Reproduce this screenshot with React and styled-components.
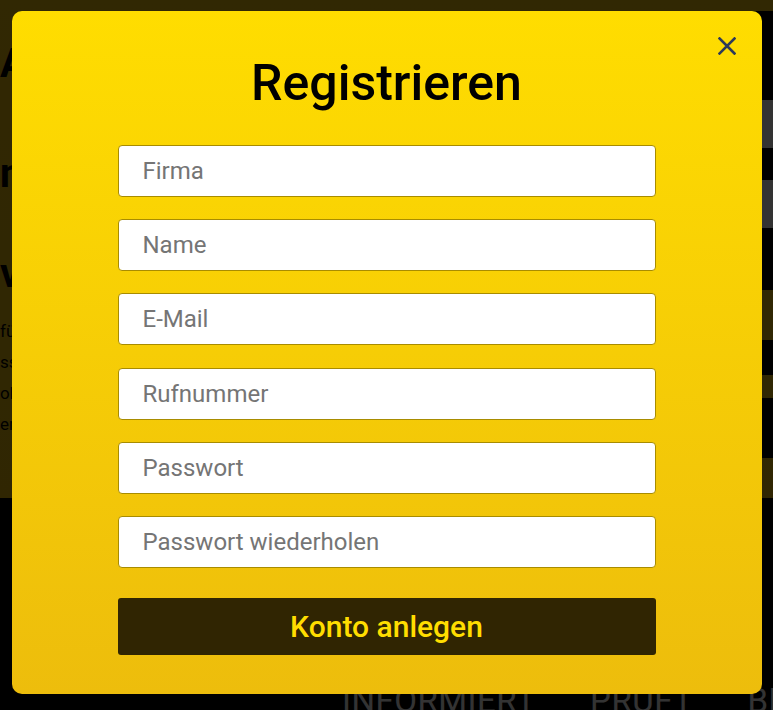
import React from "react";
import styled, { createGlobalStyle } from "styled-components";

const GlobalStyle = createGlobalStyle`
  html, body {
    margin: 0;
    padding: 0;
    background: #000;
    font-family: Roboto, "Liberation Sans", sans-serif;
    overflow: hidden;
  }
  * {
    box-sizing: border-box;
  }
`;

const Page = styled.div`
  width: 773px;
  height: 710px;
  overflow: hidden;
  background: #000;
`;

const Hero = styled.section`
  height: 498px;
  display: grid;
  grid-template-columns: 1fr 230px;
  background: linear-gradient(#f3c512, #efbf0e);
`;

const HeroText = styled.div`
  padding-top: 44px;
  color: #000;
`;

const HeroHeading = styled.div`
  font-size: 40px;
  font-weight: 700;
  line-height: 1;
  height: ${props => props.h}px;
`;

const HeroLine = styled.div`
  font-size: 17px;
  line-height: 31px;
`;

const Side = styled.div`
  display: flex;
  flex-direction: column;
`;

const LoginBox = styled.div`
  margin-top: 11px;
  height: 364px;
  background: #000;
  padding: 32px 0 0 20px;
  display: flex;
  flex-direction: column;
`;

const LoginTitle = styled.div`
  color: #f3c512;
  font-size: 28px;
  font-weight: 500;
  height: 57px;
`;

const LoginField = styled.div`
  height: 48px;
  background: #fff;
  margin-bottom: 32px;
`;

const LoginButton = styled.div`
  margin-top: 30px;
  height: 50px;
  background: #f3c512;
  color: #000;
  font-size: 24px;
  padding: 10px 20px;
`;

const InfoBox = styled.div`
  margin-top: 23px;
  height: 60px;
  background: #000;
  color: #f3c512;
  font-size: 16px;
  padding: 20px;
`;

const Lower = styled.section`
  height: 212px;
  display: flex;
  flex-direction: column;
  justify-content: flex-end;
`;

const Nav = styled.nav`
  display: flex;
  gap: 54px;
  padding-left: 342px;
  margin-bottom: -10px;
`;

const NavItem = styled.div`
  color: #fff;
  font-size: 33px;
  letter-spacing: 0.5px;
  white-space: nowrap;
`;

const Backdrop = styled.div`
  position: fixed;
  inset: 0;
  background: rgba(0, 0, 0, 0.8);
  display: flex;
  justify-content: center;
  align-items: flex-start;
  padding-top: 11px;
`;

const Modal = styled.div`
  position: relative;
  width: 750px;
  border-radius: 10px;
  background: linear-gradient(#ffdd00, #edbd0c);
  padding: 47px 0 39px;
  display: flex;
  flex-direction: column;
  align-items: center;
`;

const CloseButton = styled.button`
  position: absolute;
  top: 20px;
  right: 20px;
  width: 30px;
  height: 30px;
  border: none;
  background: transparent;
  padding: 0;
  display: flex;
  align-items: center;
  justify-content: center;
  cursor: pointer;
`;

const Title = styled.h2`
  margin: 0 0 37px;
  font-size: 50px;
  line-height: 50px;
  font-weight: 500;
  color: #000;
`;

const Form = styled.form`
  width: 538px;
  display: flex;
  flex-direction: column;
  gap: 22.2px;
`;

const Input = styled.input`
  width: 100%;
  height: 52px;
  border: 1px solid #a88c00;
  border-radius: 4px;
  background: #fff;
  padding: 0 24px;
  font-family: Roboto, "Liberation Sans", sans-serif;
  font-size: 24px;
  color: #222;
  outline: none;
  &::placeholder {
    color: #757575;
  }
`;

const Submit = styled.button`
  margin-top: 7.8px;
  height: 57px;
  border: none;
  border-radius: 3px;
  background: #302502;
  color: #ffdd00;
  font-family: Roboto, "Liberation Sans", sans-serif;
  font-size: 30px;
  font-weight: 500;
  cursor: pointer;
`;

const fields = [
  { name: "firma", placeholder: "Firma", type: "text" },
  { name: "name", placeholder: "Name", type: "text" },
  { name: "email", placeholder: "E-Mail", type: "email" },
  { name: "phone", placeholder: "Rufnummer", type: "tel" },
  { name: "password", placeholder: "Passwort", type: "password" },
  { name: "password2", placeholder: "Passwort wiederholen", type: "password" }
];

const App = () => (
  <>
    <GlobalStyle />
    <Page>
      <Hero>
        <HeroText>
          <HeroHeading h={110}>AZUBI</HeroHeading>
          <HeroHeading h={100}>nachhaltig</HeroHeading>
          <HeroHeading h={62}>vernetzt</HeroHeading>
          <HeroLine>für Unternehmen</HeroLine>
          <HeroLine>ss</HeroLine>
          <HeroLine>ob</HeroLine>
          <HeroLine>er</HeroLine>
        </HeroText>
        <Side>
          <LoginBox>
            <LoginTitle>Anmelden</LoginTitle>
            <LoginField />
            <LoginField />
            <LoginButton>Anmelden</LoginButton>
          </LoginBox>
          <InfoBox>Info-Hotline</InfoBox>
        </Side>
      </Hero>
      <Lower>
        <Nav>
          <NavItem>INFORMIERT</NavItem>
          <NavItem>PRÜFT</NavItem>
          <NavItem>BERÄT</NavItem>
        </Nav>
      </Lower>
    </Page>
    <Backdrop>
      <Modal>
        <CloseButton aria-label="Schließen">
          <svg width="18" height="18" viewBox="0 0 18 18">
            <path
              d="M1.5 1.5L16.5 16.5M16.5 1.5L1.5 16.5"
              stroke="#2e3a59"
              strokeWidth="2.6"
              strokeLinecap="square"
            />
          </svg>
        </CloseButton>
        <Title>Registrieren</Title>
        <Form onSubmit={e => e.preventDefault()}>
          {fields.map(f => (
            <Input key={f.name} name={f.name} type={f.type} placeholder={f.placeholder} />
          ))}
          <Submit type="submit">Konto anlegen</Submit>
        </Form>
      </Modal>
    </Backdrop>
  </>
);

export default App;
